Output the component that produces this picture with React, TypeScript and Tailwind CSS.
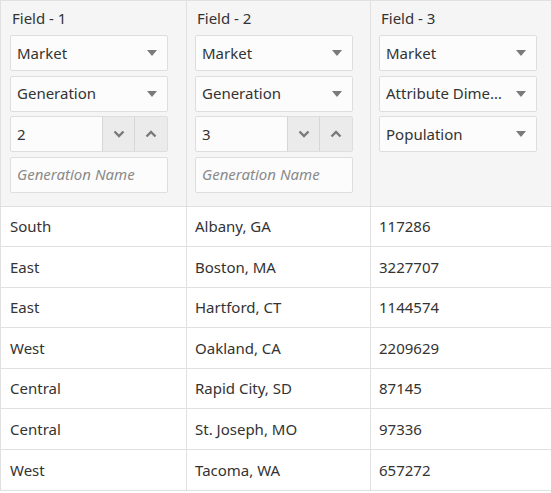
const fields = [
  { label: "Field - 1", selects: ["Market", "Generation"], num: "2" },
  { label: "Field - 2", selects: ["Market", "Generation"], num: "3" },
  { label: "Field - 3", selects: ["Market", "Attribute Dimension", "Population"] },
]

const rows = [
  ["South", "Albany, GA", "117286"],
  ["East", "Boston, MA", "3227707"],
  ["East", "Hartford, CT", "1144574"],
  ["West", "Oakland, CA", "2209629"],
  ["Central", "Rapid City, SD", "87145"],
  ["Central", "St. Joseph, MO", "97336"],
  ["West", "Tacoma, WA", "657272"],
]

const cols = ["w-[186px] pl-[9px]", "w-[184px] pl-[8px]", "flex-1 pl-[8px]"]

function Select({ value }: { value: string }) {
  return (
    <div className="h-[36px] w-[158px] flex items-center bg-[#fcfcfc] border border-[#dedede] rounded-[2px] pl-[6px] pr-[10px]">
      <span className="flex-1 truncate">{value}</span>
      <svg width="10" height="6" viewBox="0 0 10 6" className="ml-2 shrink-0">
        <path d="M0 0h10L5 6z" fill="#7a7a7a" />
      </svg>
    </div>
  )
}

function Spinner({ value }: { value: string }) {
  return (
    <div className="h-[36px] w-[158px] flex bg-[#fcfcfc] border border-[#dedede] rounded-[2px]">
      <span className="flex-1 flex items-center pl-[6px]">{value}</span>
      <button className="w-[32px] flex items-center justify-center bg-[#ebebeb] border-l border-[#d6d6d6]">
        <svg width="12" height="8" viewBox="0 0 12 8">
          <path d="M1.5 1.5L6 6l4.5-4.5" stroke="#7a7a7a" strokeWidth="2.4" fill="none" />
        </svg>
      </button>
      <button className="w-[33px] flex items-center justify-center bg-[#ebebeb] border-l border-[#d6d6d6]">
        <svg width="12" height="8" viewBox="0 0 12 8">
          <path d="M1.5 6.5L6 2l4.5 4.5" stroke="#7a7a7a" strokeWidth="2.4" fill="none" />
        </svg>
      </button>
    </div>
  )
}

export default function App() {
  return (
    <div
      className="w-[551px] h-[493px] overflow-hidden bg-white text-[#333] text-[15px]"
      style={{ fontFamily: '"Noto Sans", "Open Sans", sans-serif' }}
    >
      <div className="border-t border-l border-[#e0e0e0]">
        <div className="flex bg-[#f5f5f5] border-b border-[#e0e0e0]">
          {fields.map((f, i) => (
            <div
              key={f.label}
              className={`${cols[i]} ${i < 2 ? "border-r border-[#e0e0e0]" : ""} pt-[7px] pb-[13px]`}
            >
              <div className="h-[27px] pl-[2px] leading-[20px]">{f.label}</div>
              <div className="flex flex-col gap-[4.5px]">
                {f.selects.map((s) => (
                  <Select key={s} value={s} />
                ))}
                {f.num && <Spinner value={f.num} />}
                {f.num && (
                  <div className="h-[36px] w-[158px] flex items-center bg-[#fcfcfc] border border-[#dedede] rounded-[2px] pl-[6px] italic text-[#8a8a8a]">
                    Generation Name
                  </div>
                )}
              </div>
            </div>
          ))}
        </div>
        {rows.map((r, ri) => (
          <div key={ri} className="flex border-b border-[#e0e0e0]">
            {r.map((c, i) => (
              <div
                key={i}
                className={`${cols[i]} ${i < 2 ? "border-r border-[#e0e0e0]" : ""} h-[39.6px] flex items-center`}
              >
                {c}
              </div>
            ))}
          </div>
        ))}
      </div>
    </div>
  )
}
